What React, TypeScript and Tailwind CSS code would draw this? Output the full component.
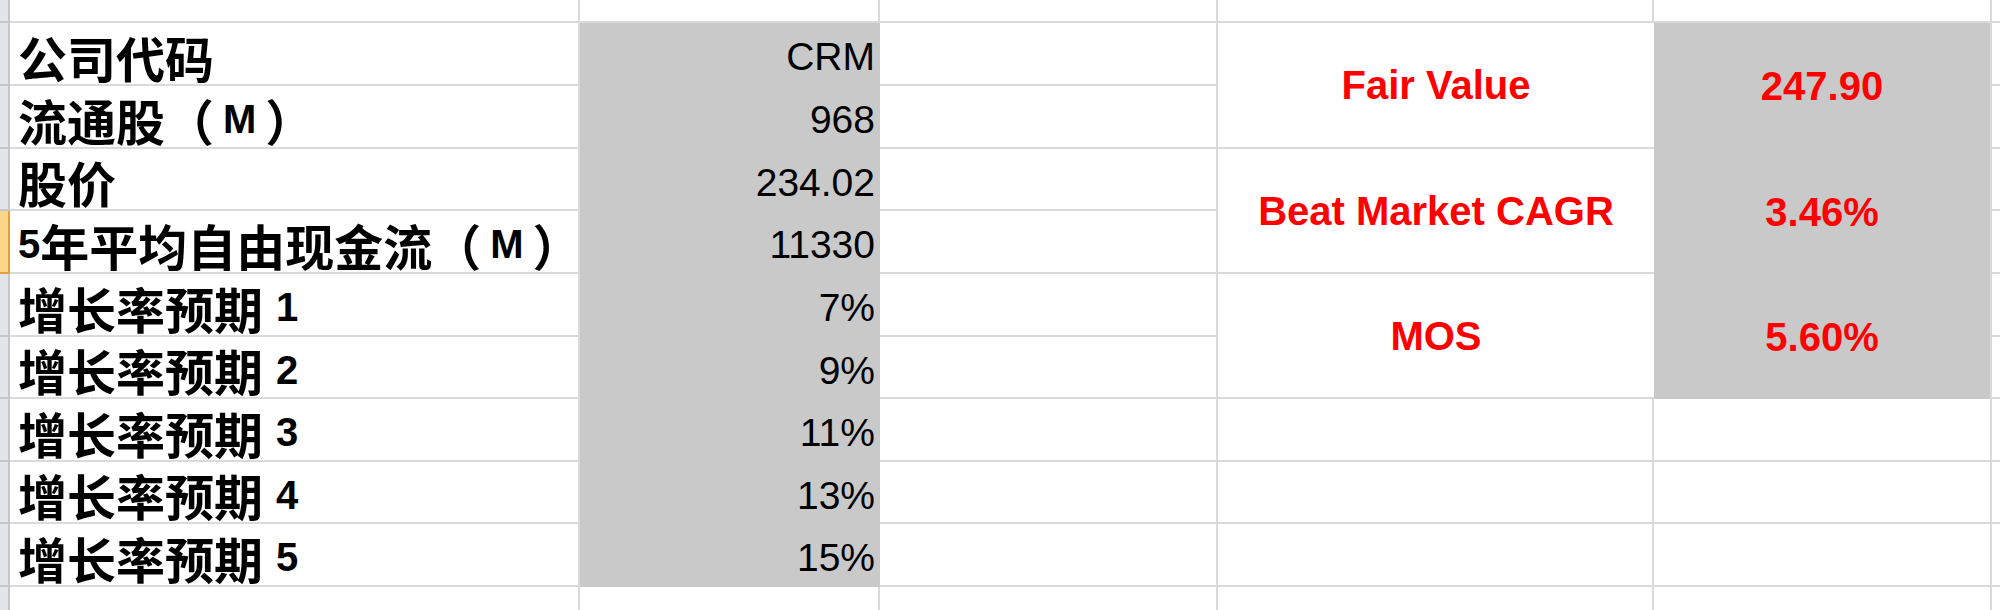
import React from "react";

type Seg = { t: string; latin?: boolean; gap?: "paren" | "digit" };

const leftRows: { label: Seg[]; value: string }[] = [
  { label: [{ t: "公司代码" }], value: "CRM" },
  { label: [{ t: "流通股（" }, { t: "M", latin: true, gap: "paren" }, { t: "）" }], value: "968" },
  { label: [{ t: "股价" }], value: "234.02" },
  {
    label: [{ t: "5", latin: true }, { t: "年平均自由现金流（" }, { t: "M", latin: true, gap: "paren" }, { t: "）" }],
    value: "11330",
  },
  { label: [{ t: "增长率预期" }, { t: "1", latin: true, gap: "digit" }], value: "7%" },
  { label: [{ t: "增长率预期" }, { t: "2", latin: true, gap: "digit" }], value: "9%" },
  { label: [{ t: "增长率预期" }, { t: "3", latin: true, gap: "digit" }], value: "11%" },
  { label: [{ t: "增长率预期" }, { t: "4", latin: true, gap: "digit" }], value: "13%" },
  { label: [{ t: "增长率预期" }, { t: "5", latin: true, gap: "digit" }], value: "15%" },
];

const metrics: Record<number, { k: string; v: string }> = {
  0: { k: "Fair Value", v: "247.90" },
  2: { k: "Beat Market CAGR", v: "3.46%" },
  4: { k: "MOS", v: "5.60%" },
};

const blank = "border-r-2 border-b-2 border-[#d9dadb] bg-white";
const stripCls = "border-r-2 border-b-2 border-[#c3c7cd] bg-[#e2e5ea]";
const stripSel = "border-r-2 border-b-2 border-[#e2a23a] bg-[#f9d68a]";

const latinBase = "inline-block h-[40px] leading-[40px] text-[40px] font-bold font-['Liberation_Sans',Arial,sans-serif]";

function Label({ segs }: { segs: Seg[] }) {
  return (
    <div className="flex items-center pl-[8px] pt-[5px] border-r-2 border-b-2 border-[#d9dadb] bg-white text-black font-bold text-[49px] leading-[49px] whitespace-nowrap font-['Noto_Sans_CJK_SC','Liberation_Sans',sans-serif]">
      {segs.map((s, j) =>
        s.latin ? (
          <span
            key={j}
            className={
              s.gap === "paren"
                ? `mx-[9px] ${latinBase}`
                : s.gap === "digit"
                ? `ml-[13px] ${latinBase}`
                : latinBase
            }
          >
            {s.t}
          </span>
        ) : (
          <span key={j} className="inline-block h-[49px] leading-[49px]">
            {s.t}
          </span>
        )
      )}
    </div>
  );
}

export default function App() {
  return (
    <div className="w-[2000px] h-[610px] overflow-hidden bg-white font-['Liberation_Sans',Arial,sans-serif]">
      <div className="grid grid-cols-[10px_570px_300px_338px_436px_338px_8px] grid-rows-[23px_63px_63px_62px_63px_63px_62px_63px_62px_63px_23px] w-[2000px] h-[610px]">
        {/* top partial row */}
        <div className={stripCls} />
        <div className={blank} />
        <div className={blank} />
        <div className={blank} />
        <div className={blank} />
        <div className={blank} />
        <div className="border-b-2 border-[#d9dadb] bg-white" />

        {leftRows.map((r, i) => (
          <React.Fragment key={i}>
            <div className={i === 3 ? stripSel : stripCls} />
            <Label segs={r.label} />
            <div className="flex items-center justify-end pr-[5px] pt-[4px] bg-[#c9c9c9] text-black text-[39px] leading-none">
              {r.value}
            </div>
            <div className={blank} />
            {metrics[i] ? (
              <>
                <div className="row-span-2 flex items-center justify-center border-b-2 border-[#d9dadb] bg-white text-[#ff0000] font-bold text-[40px] leading-none whitespace-nowrap">
                  {metrics[i].k}
                </div>
                <div className="row-span-2 flex items-center justify-center border-r-2 border-[#d9dadb] bg-[#c9c9c9] text-[#ff0000] font-bold text-[40px] leading-none">
                  {metrics[i].v}
                </div>
              </>
            ) : i >= 6 ? (
              <>
                <div className={blank} />
                <div className={blank} />
              </>
            ) : null}
            <div className="border-b-2 border-[#d9dadb] bg-white" />
          </React.Fragment>
        ))}

        {/* bottom partial row */}
        <div className="border-r-2 border-[#c3c7cd] bg-[#e2e5ea]" />
        <div className="border-r-2 border-[#d9dadb] bg-white" />
        <div className="border-r-2 border-[#d9dadb] bg-white" />
        <div className="border-r-2 border-[#d9dadb] bg-white" />
        <div className="border-r-2 border-[#d9dadb] bg-white" />
        <div className="border-r-2 border-[#d9dadb] bg-white" />
        <div className="bg-white" />
      </div>
    </div>
  );
}
